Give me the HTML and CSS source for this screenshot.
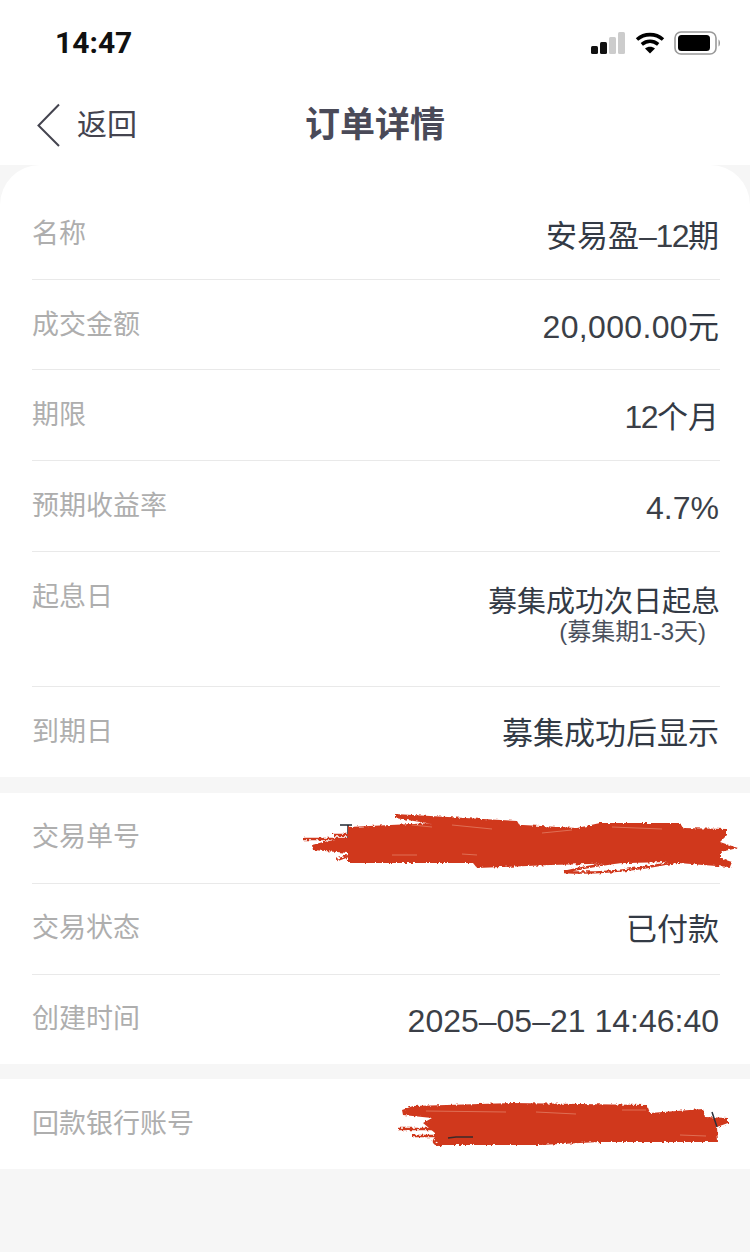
FILE: index.html
```html
<!DOCTYPE html>
<html lang="zh-CN">
<head>
<meta charset="utf-8">
<title>订单详情</title>
<link rel="stylesheet" href="styles.css">
</head>
<body>
<svg class="defs" width="0" height="0">
  <filter id="rough" x="-5%" y="-20%" width="110%" height="140%">
    <feTurbulence type="fractalNoise" baseFrequency="0.35" numOctaves="2" seed="4"/>
    <feDisplacementMap in="SourceGraphic" scale="4"/>
    <feGaussianBlur stdDeviation="0.35"/>
  </filter>
</svg>
<div class="page">
  <header class="top">
    <div class="status">
      <span class="time">14:47</span>
      <div class="status-icons">
        <svg class="signal" width="36" height="22" viewBox="0 0 36 22">
          <rect x="1" y="14" width="7" height="8" rx="1.500" fill="#111"/>
          <rect x="10" y="10" width="7" height="12" rx="1.500" fill="#111"/>
          <rect x="19" y="5" width="7" height="17" rx="1.500" fill="#ccc"/>
          <rect x="28" y="0" width="7" height="22" rx="1.500" fill="#ccc"/>
        </svg>
        <svg class="wifi" width="30" height="22" viewBox="0 0 30 22">
          <path d="M2 7.500C9.500 1 20.500 1 28 7.500M6.800 12.300C11.800 8.300 18.200 8.300 23.200 12.300" fill="none" stroke="#000" stroke-width="3.600"/>
          <path d="M10 16.500C12.800 14.300 17.200 14.300 20 16.500L15 21.500Z" fill="#000"/>
        </svg>
        <svg class="battery" width="48" height="24" viewBox="0 0 48 24">
          <rect x="1" y="1" width="41" height="22" rx="6" fill="none" stroke="#999" stroke-width="1.600"/>
          <rect x="4" y="4" width="32" height="16" rx="3.500" fill="#000"/>
          <path d="M44.500 8.500C46.500 9.500 46.500 14.500 44.500 15.500Z" fill="#999"/>
        </svg>
      </div>
    </div>
    <nav class="nav">
      <div class="back">
        <svg class="chevron" width="26" height="44" viewBox="0 0 26 44">
          <path d="M23 1.500L2.500 22.500L23 43" fill="none" stroke="#44444f" stroke-width="2"/>
        </svg>
        <span class="back-text">返回</span>
      </div>
      <h1 class="title">订单详情</h1>
    </nav>
  </header>

  <main>
    <section class="card card-first">
      <div class="row"><span class="label">名称</span><span class="value">安易盈<span class="num num-tight">–12</span>期</span></div>
      <div class="row row-short"><span class="label">成交金额</span><span class="value"><span class="num num-wide">20,000.00</span>元</span></div>
      <div class="row"><span class="label">期限</span><span class="value"><span class="num num-tight">12</span>个月</span></div>
      <div class="row"><span class="label">预期收益率</span><span class="value"><span class="num">4.7%</span></span></div>
      <div class="row row-tall">
        <span class="label">起息日</span>
        <div class="value-stack">
          <span class="value value-small">募集成功次日起息</span>
          <span class="note">(募集期1-3天)</span>
        </div>
      </div>
      <div class="row"><span class="label">到期日</span><span class="value">募集成功后显示</span></div>
    </section>

    <section class="card card-second">
      <div class="row">
        <span class="label">交易单号</span>
        <svg class="scribble scribble-a" width="440" height="66" viewBox="0 0 440 66">
          <path d="M38 13H50M46 13V34" stroke="#222a33" stroke-width="1.500" fill="none"/>
          <g filter="url(#rough)">
            <path d="M46 15L131 11L221 13L275 16L298 11L378 11L381 16L425 17L425 23L418 30L436 36L418 40L418 46L430 50L428 55L401 53L365 50L248 53L175 56L171 51L46 51L46 41L11 38L10 33L21 30L46 26Z" fill="#d0391f"/>
            <path d="M93 2L215 9L218 14L131 12L93 6Z" fill="#d0391f"/>
            <path d="M1 27H46M31 23H46M35 48L46 44" stroke="#d0391f" stroke-width="2.500" fill="none"/>
            <path d="M262 60C300 50 345 47 392 40M262 60C310 63 355 54 392 46" stroke="#d0391f" stroke-width="2.500" fill="none"/>
          </g>
          <path d="M110 13L130 15M150 13L190 17M240 21L270 18M310 15L360 17M90 43L115 43M160 42L175 43" stroke="#df6f55" stroke-width="1" fill="none"/>
        </svg>
      </div>
      <div class="row"><span class="label">交易状态</span><span class="value">已付款</span></div>
      <div class="row"><span class="label">创建时间</span><span class="value"><span class="num">2025–05–21 14:46:40</span></span></div>
    </section>

    <section class="card">
      <div class="row">
        <span class="label">回款银行账号</span>
        <svg class="scribble scribble-b" width="340" height="52" viewBox="0 0 340 52">
          <g filter="url(#rough)">
            <path d="M6 10L17 6L117 3L251 5L254 13L307 9L309 17L332 18L332 23L321 27L322 42L204 42L144 45L44 45L39 40L39 33L27 23L36 18L7 15Z" fill="#d0391f"/>
            <path d="M2 29H51M16 36H51M40 38C36 42 38 45 46 45" stroke="#d0391f" stroke-width="2.500" fill="none"/>
          </g>
          <path d="M316 12L321 27" stroke="#2a2f3a" stroke-width="1.500" fill="none"/>
          <path d="M52 38L60 37H77" stroke="#3a2a2a" stroke-width="1.500" fill="none"/>
          <path d="M30 11L110 12M140 12L180 14M226 10L250 10M284 35L310 36" stroke="#df6f55" stroke-width="1" fill="none"/>
        </svg>
      </div>
    </section>
  </main>
</div>
</body>
</html>
```
FILE: styles.css
```css
* { box-sizing: border-box; }
html, body { margin: 0; padding: 0; }
body {
  background: #f6f6f6;
  font-family: "Liberation Sans", "Noto Sans CJK SC", sans-serif;
  color: #333a45;
}
.defs { position: absolute; }
.page { width: 750px; height: 1252px; overflow: hidden; }
.top { background: #fff; height: 165px; }
.status {
  height: 85px;
  padding: 25px 28px 0 55px;
  display: flex;
  justify-content: space-between;
  align-items: flex-start;
}
.time {
  font-family: Roboto, "Liberation Sans", sans-serif;
  font-size: 30px;
  font-weight: 700;
  line-height: 36px;
  color: #111;
}
.status-icons { display: flex; align-items: center; gap: 9px; padding-top: 6px; }
.nav {
  position: relative;
  height: 80px;
  display: flex;
  align-items: center;
  padding-left: 36px;
}
.back {
  display: flex;
  align-items: center;
  gap: 15px;
  font-size: 30px;
  color: #44444f;
}
.back-text { line-height: 40px; }
.chevron { display: block; }
.title {
  position: absolute;
  left: 0;
  right: 0;
  top: 18px;
  margin: 0;
  text-align: center;
  font-size: 35px;
  line-height: 44px;
  font-weight: 700;
  color: #4a4a58;
}
main { display: flex; flex-direction: column; }
.card { background: #fff; padding: 0 30px 0 32px; margin-top: 15px; }
.card-first { margin-top: 0; padding-top: 24px; border-radius: 40px 40px 0 0; }
.card-second { margin-top: 16px; }
.row {
  position: relative;
  height: 91px;
  padding-top: 27px;
  display: flex;
  justify-content: space-between;
  align-items: flex-start;
  border-bottom: 1px solid #e9e9e9;
}
.row.row-short { height: 90px; }
.card > .row:last-child { border-bottom: 0; height: 90px; }
.card-second .row { padding-top: 26px; }
.card-second > .row:last-child { height: 89px; }
.row-tall { height: 135px; }
.label {
  font-size: 27px;
  line-height: 36px;
  color: #aeaeae;
}
.value {
  font-size: 31px;
  line-height: 40px;
  color: #333a45;
  white-space: nowrap;
  margin-right: 1px;
}
.num { font-size: 32px; color: #3b3f47; }
.num-tight { letter-spacing: -1.500px; }
.num-wide { letter-spacing: 0.350px; }
.value-stack { display: flex; flex-direction: column; align-items: flex-end; padding-top: 3px; }
.value-small { font-size: 29px; margin-right: 0; }
.note {
  font-size: 24px;
  line-height: 30px;
  margin: -5px 14px 0 0;
  color: #4a505c;
  white-space: nowrap;
}
.scribble { position: absolute; display: block; }
.scribble-a { left: 270px; top: 19px; }
.scribble-b { left: 364px; top: 21px; }
```
